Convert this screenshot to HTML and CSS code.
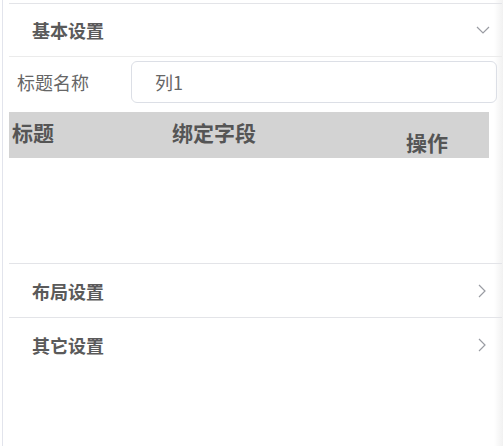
FILE: index.html
```html
<!DOCTYPE html>
<html lang="zh-CN">
<head>
<meta charset="utf-8">
<title>设置</title>
<link rel="stylesheet" href="styles.css">
</head>
<body>
<div class="panel">
  <section class="collapse-item">
    <div class="collapse-header">
      <span class="collapse-title">基本设置</span>
      <svg class="arrow-down" width="14" height="8" viewBox="0 0 14 8"><path d="M1 1 L7 7 L13 1" fill="none" stroke="#9a9ca3" stroke-width="1.2"/></svg>
    </div>
    <div class="collapse-body">
      <div class="form-row">
        <label class="form-label">标题名称</label>
        <div class="input">列1</div>
      </div>
      <div class="table">
        <div class="thead">
          <div class="th th-title">标题</div>
          <div class="th th-field">绑定字段</div>
          <div class="th th-op">操作</div>
        </div>
        <div class="tbody"></div>
      </div>
    </div>
  </section>
  <section class="collapse-item">
    <div class="collapse-header">
      <span class="collapse-title">布局设置</span>
      <svg class="arrow-right" width="8" height="14" viewBox="0 0 8 14"><path d="M1 1 L7 7 L1 13" fill="none" stroke="#9a9ca3" stroke-width="1.2"/></svg>
    </div>
  </section>
  <section class="collapse-item">
    <div class="collapse-header">
      <span class="collapse-title">其它设置</span>
      <svg class="arrow-right" width="8" height="14" viewBox="0 0 8 14"><path d="M1 1 L7 7 L1 13" fill="none" stroke="#9a9ca3" stroke-width="1.2"/></svg>
    </div>
  </section>
</div>
</body>
</html>
```

FILE: styles.css
```css
html {
  background: linear-gradient(to right, #ffffff 494px, #f1f1f1 503px);
  height: 100%;
}
body {
  margin: 0;
  font-family: "Noto Sans CJK SC", "Noto Sans", sans-serif;
  color: #606266;
  height: 100%;
}
.panel {
  margin-left: 2px;
  border-left: 1px solid #e2e4ec;
  padding: 3px 1px 0 6px;
  height: 446px;
  box-sizing: border-box;
}
.collapse-item {
  border-top: 1px solid #e3e4e8;
}
.collapse-header {
  height: 53px;
  display: flex;
  align-items: center;
  justify-content: space-between;
  padding: 0 12px 0 23px;
}
.collapse-item:first-child .collapse-header {
  height: 52px;
  border-bottom: 1px solid #ebebeb;
}
.collapse-title {
  font-size: 18px;
  font-weight: bold;
  color: #5a5a5a;
  line-height: 24px;
}
.arrow-right { margin-right: 4px; }
.collapse-body {
  height: 206px;
  padding-top: 4px;
  box-sizing: border-box;
}
.form-row {
  display: flex;
  align-items: center;
  padding-left: 8px;
  padding-right: 5px;
}
.form-label {
  width: 114px;
  font-size: 18px;
  color: #666;
}
.input {
  flex: 1;
  height: 42px;
  box-sizing: border-box;
  border: 1px solid #dcdfe6;
  border-radius: 6px;
  padding-left: 23px;
  display: flex;
  align-items: center;
  font-size: 18px;
  color: #666;
}
.table {
  margin-top: 9px;
  margin-right: 13px;
}
.thead {
  display: grid;
  grid-template-columns: 160px 234px 1fr;
  height: 46px;
  background: #d3d3d3;
}
.th {
  padding-left: 3px;
  font-size: 21px;
  font-weight: bold;
  color: #555;
  line-height: 26px;
  padding-top: 7px;
}
.th-op { padding-top: 17px; }
.tbody { height: 104px; }
```
